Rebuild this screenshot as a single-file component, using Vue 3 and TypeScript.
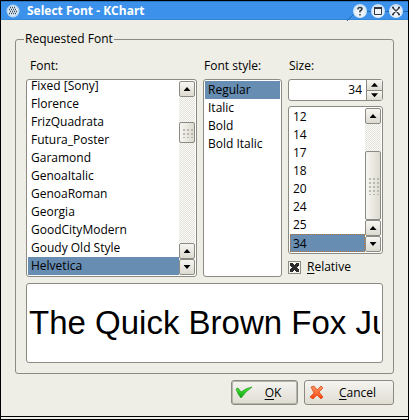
<script setup lang="ts">
import { onMounted, ref } from 'vue'

const fonts: string[] = [
  'Fixed [Sony]', 'Florence', 'FrizQuadrata', 'Futura_Poster', 'Garamond', 'GenoaItalic',
  'GenoaRoman', 'Georgia', 'GoodCityModern', 'Goudy Old Style', 'Helvetica',
]
const styles: string[] = ['Regular', 'Italic', 'Bold', 'Bold Italic']
const sizes: number[] = [12, 14, 17, 18, 20, 24, 25, 34]

const family = ref('Helvetica')
const style = ref('Regular')
const size = ref(34)
const relative = ref(true)
const sample = ref('The Quick Brown Fox Jumps Over The Lazy Dog')

const familyList = ref<HTMLSelectElement | null>(null)
const sizeList = ref<HTMLSelectElement | null>(null)

function scroll(list: HTMLSelectElement | null, rows: number) {
  if (list) list.scrollTop += rows * 18
}

onMounted(() => {
  scroll(familyList.value, fonts.length)
})
</script>

<template>
  <main class="window">
    <header class="titlebar">
      <svg class="orb" viewBox="0 0 14 14" aria-hidden="true">
        <circle cx="7" cy="7" r="6.5" fill="#b9d6f2" />
        <circle cx="7" cy="7" r="5" fill="#dfecf8" />
        <path d="M4 3.5h6M3 5.5h8M4 7.5h7M3 9.5h7" stroke="#394b60" stroke-width="1.3" stroke-dasharray="1 1" />
      </svg>
      <h1>Select Font - KChart</h1>
      <div class="controls">
        <svg class="trace" viewBox="0 0 62 19" aria-hidden="true">
          <path d="M1 18L10 8.500H62" fill="none" stroke="#2467ab" />
        </svg>
        <button type="button" aria-label="Help">
          <svg viewBox="0 0 14 14"><path d="M5 5.500V4.500Q5 3.500 7 3.500T9 5Q9 6 7 7V8.500M7 10v1.500" fill="none" stroke="#30363d" stroke-width="1.5" /></svg>
        </button>
        <button type="button" aria-label="Maximize">
          <svg viewBox="0 0 14 14"><path d="M3.500 4v6.500h7V4" fill="none" stroke="#30363d" /><path d="M3 4h8" stroke="#30363d" stroke-width="2" /></svg>
        </button>
        <button type="button" aria-label="Close">
          <svg viewBox="0 0 14 14"><path d="M3 3.500h2M9 3.500h2M3 10.500h2M9 10.500h2M4 4l6 6M10 4l-6 6" fill="none" stroke="#30363d" stroke-width="1.4" /></svg>
        </button>
      </div>
    </header>

    <form class="body" @submit.prevent>
      <fieldset>
        <legend>Requested Font</legend>
        <div class="columns">
          <div class="column">
            <label for="family">Font:</label>
            <div class="frame tall">
              <select id="family" ref="familyList" v-model="family" size="11">
                <option v-for="f in fonts" :key="f" :value="f">{{ f }}</option>
              </select>
              <div class="scrollbar">
                <button type="button" aria-label="Scroll fonts up" @click="scroll(familyList, -1)"><i class="up"></i></button>
                <div class="track family-track"><div class="thumb"><i class="grip"></i></div></div>
                <button type="button" aria-label="Scroll fonts back" @click="scroll(familyList, -1)"><i class="up"></i></button>
                <button type="button" aria-label="Scroll fonts down" @click="scroll(familyList, 1)"><i class="down"></i></button>
              </div>
            </div>
          </div>

          <div class="column">
            <label for="style">Font style:</label>
            <div class="frame tall">
              <select id="style" v-model="style" size="4">
                <option v-for="s in styles" :key="s" :value="s">{{ s }}</option>
              </select>
            </div>
          </div>

          <div class="column">
            <label for="size">Size:</label>
            <div class="spinner">
              <input id="size" v-model.number="size" type="text" inputmode="numeric" />
              <div class="steps">
                <button type="button" aria-label="Increase size" @click="size++"><i class="up"></i></button>
                <button type="button" aria-label="Decrease size" @click="size--"><i class="down"></i></button>
              </div>
            </div>
            <div class="frame sizes">
              <select ref="sizeList" v-model="size" size="8" aria-label="Sizes">
                <option v-for="n in sizes" :key="n" :value="n">{{ n }}</option>
              </select>
              <div class="scrollbar">
                <button type="button" aria-label="Scroll sizes up" @click="scroll(sizeList, -1)"><i class="up"></i></button>
                <div class="track size-track"><div class="thumb"><i class="grip"></i></div></div>
                <button type="button" aria-label="Scroll sizes back" @click="scroll(sizeList, -1)"><i class="up"></i></button>
                <button type="button" aria-label="Scroll sizes down" @click="scroll(sizeList, 1)"><i class="down"></i></button>
              </div>
            </div>
            <label class="check">
              <input v-model="relative" type="checkbox" />
              <span><u>R</u>elative</span>
            </label>
          </div>
        </div>
        <input v-model="sample" class="sample" type="text" aria-label="Sample text" />
      </fieldset>

      <div class="actions">
        <button type="submit" class="action ok">
          <svg viewBox="0 0 18 16" aria-hidden="true">
            <defs>
              <linearGradient id="leaf" x1="0" y1="0" x2="0" y2="1">
                <stop offset="0" stop-color="#52ee3b" /><stop offset="1" stop-color="#079c10" />
              </linearGradient>
            </defs>
            <path d="M1 4L3 3L6 7Q11 3 17 2Q11 6 6 13Q3 10 1 4Z" fill="url(#leaf)" stroke="#169a18" stroke-width=".7" />
          </svg>
          <span><u>O</u>K</span>
        </button>
        <button type="button" class="action cancel">
          <svg viewBox="0 0 18 16" aria-hidden="true">
            <defs>
              <linearGradient id="flame" x1="0" y1="0" x2="0" y2="1">
                <stop offset="0" stop-color="#ff9b62" /><stop offset="1" stop-color="#f4420c" />
              </linearGradient>
            </defs>
            <path d="M3 2L6 1L9 5L13 1L15 3L11 7L15 12L13 14L9 10L5 14L2 12L6 8Z" fill="url(#flame)" stroke="#e2481c" stroke-width=".8" />
          </svg>
          <span><u>C</u>ancel</span>
        </button>
      </div>
    </form>
    <div class="sill"></div>
  </main>
</template>

<style>
body {
  margin: 0;
  background: #eeeee6;
}
</style>

<style scoped>
.window {
  box-sizing: border-box;
  border: 1px solid #000;
  background: #eeeee6;
  color: #000;
  font: 12px/18px 'Open Sans', 'Noto Sans', sans-serif;
}
button,
input,
select {
  box-sizing: border-box;
  margin: 0;
  padding: 0;
  border: 0;
  border-radius: 0;
  outline: 0;
  color: #000;
  font: inherit;
}
.titlebar {
  display: flex;
  align-items: center;
  height: 19px;
  box-sizing: border-box;
  padding: 0 5px;
  border-top: 1px solid #2a77c8;
  border-bottom: 1px solid #3684d4;
  background: #3c92ea;
}
.orb {
  width: 14px;
  height: 14px;
}
h1 {
  flex: 1;
  margin: 0 0 0 7px;
  color: #fff;
  font: bold 12px/18px 'Open Sans', 'Noto Sans', sans-serif;
}
.controls {
  position: relative;
  display: flex;
  gap: 4px;
}
.trace {
  position: absolute;
  top: -1px;
  right: -5px;
  width: 62px;
  height: 19px;
}
.controls button {
  position: relative;
  width: 14px;
  height: 14px;
  border-radius: 50%;
  background: radial-gradient(circle at 50% 60%, #f2f6fa 30%, #a9cdf1 100%);
}
.controls button svg {
  display: block;
}
.body {
  padding: 10px 14px 11px;
}
fieldset {
  min-width: 0;
  margin: 0;
  padding: 9px 10px 10px;
  border: 1px solid #8b8b84;
  border-radius: 3px;
}
legend {
  margin-left: -2px;
  padding: 0 1px;
}
.columns {
  display: grid;
  grid-template-columns: minmax(0, 1fr) 79px 95px;
  gap: 6px;
}
.column {
  display: flex;
  flex-direction: column;
}
.column > label {
  margin-left: 4px;
}
.column > label:first-child {
  margin-bottom: 4px;
}
.column:nth-child(2) > label {
  margin-left: 1px;
}
.column:nth-child(3) > label:first-child {
  margin-left: 1px;
}
.frame {
  box-sizing: border-box;
  display: flex;
  padding: 1px;
  border: 1px solid #8b8b84;
  border-radius: 3px;
  background: #fff;
}
.tall {
  height: 198px;
}
.sizes {
  height: 148px;
  margin-top: 5px;
}
select {
  flex: 1;
  min-width: 0;
  height: 100%;
  background: #fff;
  overflow: hidden;
  scrollbar-width: none;
}
option {
  box-sizing: border-box;
  height: 18px;
  min-height: 18px;
  padding: 0 3px;
  line-height: 18px;
}
option:checked {
  background: #678db2 linear-gradient(#678db2, #678db2);
  color: #000;
  -webkit-text-fill-color: #000;
}
.sizes option:checked {
  padding: 0 2px;
  border: 1px dotted #b5763b;
  line-height: 16px;
}
.scrollbar {
  display: flex;
  flex-direction: column;
  width: 16px;
}
.scrollbar button,
.thumb,
.steps button {
  box-sizing: border-box;
  display: flex;
  align-items: center;
  justify-content: center;
  border: 1px solid #8b8b84;
  border-radius: 2px;
  background: linear-gradient(#f7f6f2, #dddad0);
}
.scrollbar button {
  width: 16px;
  height: 16px;
}
.track {
  box-sizing: border-box;
  flex: 1;
  display: flex;
  background: repeating-conic-gradient(#e4e4dc 0 25%, #fafaf8 0 50%) 0 0 / 2px 2px;
}
.family-track {
  padding: 25px 0 100px;
}
.size-track {
  padding: 27px 0 0;
}
.thumb {
  flex: 1;
  background: linear-gradient(90deg, #f7f6f2, #dddad0);
}
.grip {
  width: 11px;
  height: 10px;
  background: radial-gradient(circle, #bab9b0 1px, transparent 1px) 0 0 / 4px 4px;
}
.size-track .grip {
  height: 18px;
}
.up,
.down {
  width: 7px;
  height: 4px;
  background: #000;
  clip-path: polygon(50% 0, 100% 100%, 0 100%);
}
.down {
  clip-path: polygon(0 0, 100% 0, 50% 100%);
}
.spinner {
  box-sizing: border-box;
  display: flex;
  height: 22px;
  border: 1px solid #8b8b84;
  border-radius: 3px;
  background: #fff;
}
.spinner input {
  flex: 1;
  min-width: 0;
  padding-right: 4px;
  background: transparent;
  text-align: right;
}
.steps {
  display: flex;
  flex-direction: column;
  width: 16px;
}
.steps button {
  flex: 1;
  border-width: 0 0 0 1px;
  border-radius: 0;
}
.steps button + button {
  border-top-width: 1px;
}
.column > .check {
  display: flex;
  align-items: center;
  gap: 6px;
  margin: 4px 0 0;
}
.check input {
  appearance: none;
  width: 13px;
  height: 13px;
  border: 1px solid #8b8b84;
  background: #f5f5f0;
}
.check input:checked {
  background:
    linear-gradient(45deg, transparent 38%, #2b2b2b 38% 62%, transparent 62%) center / 9px 9px no-repeat,
    linear-gradient(-45deg, transparent 38%, #2b2b2b 38% 62%, transparent 62%) center / 9px 9px no-repeat,
    #f5f5f0;
}
.sample {
  display: block;
  width: 100%;
  height: 80px;
  margin-top: 6px;
  padding: 0 2px;
  border: 1px solid #8b8b84;
  border-radius: 3px;
  background: #fff;
  font: 33px/40px 'Liberation Sans', Arial, sans-serif;
}
.actions {
  display: flex;
  justify-content: flex-end;
  gap: 6px;
  margin-top: 6px;
}
.action {
  display: flex;
  align-items: center;
  height: 25px;
  padding: 0 4px 0 3px;
  border: 1px solid #8b8b84;
  border-radius: 3px;
  background: linear-gradient(#f5f4f0, #dfdcd2);
}
.action svg {
  width: 18px;
  height: 16px;
}
.action span {
  flex: 1;
  text-align: center;
}
.ok {
  width: 67px;
  box-shadow: inset 0 0 0 1px #b5b4aa;
}
.cancel {
  width: 90px;
}
u {
  text-underline-offset: 2px;
}
.sill {
  height: 2px;
  border-top: 1px solid #000;
}
</style>
